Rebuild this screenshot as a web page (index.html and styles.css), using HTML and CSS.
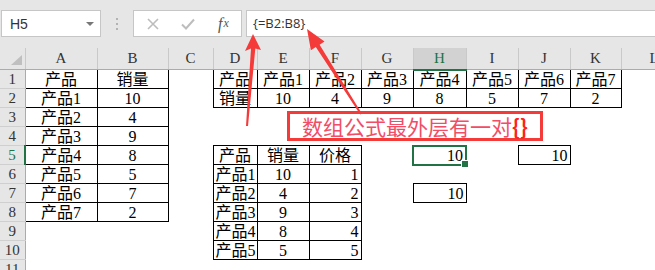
FILE: index.html
```html
<!DOCTYPE html>
<html lang="zh-CN">
<head>
    <meta charset="UTF-8">
    <title>数组公式</title>
    <link rel="stylesheet" href="styles.css">
</head>
<body>
    <div class="toolbar">
        <div class="namebox"><span>H5</span><span class="caret"></span></div>
        <div class="grip"><i></i><i></i><i></i></div>
        <div class="buttons">
            <span class="btn">
                <svg width="12" height="12" viewBox="0 0 12 12"><path d="M1 1L11 11M11 1L1 11" stroke="#bdbdbd" stroke-width="1.6" fill="none"/></svg>
            </span>
            <span class="btn">
                <svg width="14" height="12" viewBox="0 0 14 12"><path d="M1 6.5L5 10.5L13 1.5" stroke="#bdbdbd" stroke-width="2" fill="none"/></svg>
            </span>
            <span class="btn fx"><i>f</i><sub>x</sub></span>
        </div>
        <div class="formula">{=B2:B8}</div>
    </div>

    <table class="sheet">
        <colgroup>
            <col style="width:25px"><col style="width:72px"><col style="width:71px"><col style="width:45px">
            <col style="width:44px"><col style="width:52px"><col style="width:52px"><col style="width:52px">
            <col style="width:53px"><col style="width:52px"><col style="width:52px"><col style="width:51px"><col style="width:66px">
        </colgroup>
        <thead>
            <tr>
                <th class="corner"><span class="tri"></span></th>
                <th>A</th><th>B</th><th>C</th><th>D</th><th>E</th><th>F</th><th>G</th>
                <th class="cur">H</th><th>I</th><th>J</th><th>K</th><th>L</th>
            </tr>
        </thead>
        <tbody>
            <tr>
                <th>1</th><td class="b c">产品</td><td class="b c">销量</td><td></td>
                <td class="b c">产品</td><td class="b c">产品1</td><td class="b c">产品2</td><td class="b c">产品3</td>
                <td class="b c">产品4</td><td class="b c">产品5</td><td class="b c">产品6</td><td class="b c">产品7</td><td></td>
            </tr>
            <tr>
                <th>2</th><td class="b c">产品1</td><td class="b c">10</td><td></td>
                <td class="b c">销量</td><td class="b c">10</td><td class="b c">4</td><td class="b c">9</td>
                <td class="b c">8</td><td class="b c">5</td><td class="b c">7</td><td class="b c">2</td><td></td>
            </tr>
            <tr>
                <th>3</th><td class="b c">产品2</td><td class="b c">4</td><td></td>
                <td></td><td></td><td></td><td></td><td></td><td></td><td></td><td></td><td></td>
            </tr>
            <tr>
                <th>4</th><td class="b c">产品3</td><td class="b c">9</td><td></td>
                <td></td><td></td><td></td><td></td><td></td><td></td><td></td><td></td><td></td>
            </tr>
            <tr>
                <th class="cur">5</th><td class="b c">产品4</td><td class="b c">8</td><td></td>
                <td class="b c">产品</td><td class="b c">销量</td><td class="b c">价格</td><td></td>
                <td class="sel r">10</td><td></td><td class="b r">10</td><td></td><td></td>
            </tr>
            <tr>
                <th>6</th><td class="b c">产品5</td><td class="b c">5</td><td></td>
                <td class="b l">产品1</td><td class="b c">10</td><td class="b r">1</td><td></td>
                <td></td><td></td><td></td><td></td><td></td>
            </tr>
            <tr>
                <th>7</th><td class="b c">产品6</td><td class="b c">7</td><td></td>
                <td class="b l">产品2</td><td class="b c">4</td><td class="b r">2</td><td></td>
                <td class="b r">10</td><td></td><td></td><td></td><td></td>
            </tr>
            <tr>
                <th>8</th><td class="b c">产品7</td><td class="b c">2</td><td></td>
                <td class="b l">产品3</td><td class="b c">9</td><td class="b r">3</td><td></td>
                <td></td><td></td><td></td><td></td><td></td>
            </tr>
            <tr>
                <th>9</th><td></td><td></td><td></td>
                <td class="b l">产品4</td><td class="b c">8</td><td class="b r">4</td><td></td>
                <td></td><td></td><td></td><td></td><td></td>
            </tr>
            <tr>
                <th>10</th><td></td><td></td><td></td>
                <td class="b l">产品5</td><td class="b c">5</td><td class="b r">5</td><td></td>
                <td></td><td></td><td></td><td></td><td></td>
            </tr>
            <tr>
                <th>11</th><td></td><td></td><td></td>
                <td></td><td></td><td></td><td></td><td></td><td></td><td></td><td></td><td></td>
            </tr>
        </tbody>
    </table>

    <div class="note">数组公式最外层有一对<b>{}</b></div>

    <svg class="arrows" width="655" height="270" viewBox="0 0 655 270">
        <polygon fill="#f53a3a" points="253,34 261,50 255.3,48.5 248,126 246,126 251,48.5 245,51"/>
        <polygon fill="#f53a3a" points="307,29 324.5,41.6 319.6,44.7 361.8,113.5 360.2,114.5 315.8,47.1 310.9,50.2"/>
    </svg>
</body>
</html>
```

FILE: styles.css
```css
* { box-sizing: border-box; }
body { margin: 0; width: 655px; height: 270px; overflow: hidden; position: relative; background: #fff; font-family: "Liberation Serif", "Noto Sans CJK SC", serif; color: #000; }

/* formula bar */
.toolbar { display: flex; align-items: flex-start; height: 48px; padding-top: 10px; background: #e6e6e6; }
.namebox { display: flex; align-items: center; justify-content: space-between; width: 100px; height: 27px; margin-left: 1px; padding: 0 6px 0 8px; background: #fff; border: 1px solid #c6c6c6; font: 14px "Liberation Sans", sans-serif; color: #333; }
.caret { border-left: 4px solid transparent; border-right: 4px solid transparent; border-top: 4px solid #777; }
.grip { display: flex; flex-direction: column; align-items: center; gap: 3px; width: 32px; padding-top: 8px; }
.grip i { width: 2px; height: 2px; background: #b3b3b3; }
.buttons { display: flex; align-items: center; width: 109px; height: 27px; padding-left: 1px; background: #fff; border: 1px solid #c6c6c6; }
.btn { display: flex; justify-content: center; align-items: center; width: 36px; }
.fx { font: italic 16px "Liberation Serif", serif; color: #555; }
.fx sub { font-size: 12px; font-style: italic; vertical-align: -2px; margin-left: 1px; }
.formula { flex: 1; height: 27px; margin-left: 4px; margin-right: -2px; padding-left: 6px; background: #fff; border: 1px solid #c6c6c6; font: 13px "Open Sans", sans-serif; line-height: 25px; color: #333; }

/* grid */
.sheet { border-collapse: collapse; table-layout: fixed; width: 687px; font-size: 16px; }
.sheet td, .sheet th { height: 19px; padding: 0 2px; line-height: 17px; white-space: nowrap; overflow: visible; }
.sheet td { vertical-align: bottom; }
.sheet th { background: #e6e6e6; font-weight: normal; font-size: 15px; color: #333; text-align: center; vertical-align: middle; }
.sheet thead th { border-right: 1px solid #c9c9c9; border-bottom: 1px solid #ababab; }
.sheet tbody th { border-right: 1px solid #ababab; border-bottom: 1px solid #cfcfcf; }
.sheet thead th.cur { background: #d2d2d2; color: #217346; border-bottom: 2px solid #217346; }
.sheet tbody th.cur { color: #217346; border-right: 2px solid #217346; }
.corner { text-align: right !important; vertical-align: bottom !important; padding: 0 3px 4px 0 !important; }
.tri { display: inline-block; border-left: 11px solid transparent; border-bottom: 10px solid #bfbfbf; vertical-align: bottom; }
.b { border: 1px solid #000; }
.c { text-align: center; }
.l { text-align: left; }
.r { text-align: right; }
.sel { position: relative; border: 2px solid #217346; }
.sel::after { content: ""; position: absolute; right: -4px; bottom: -4px; width: 6px; height: 6px; background: #217346; border: 1px solid #fff; }

/* callout */
.note { position: absolute; left: 287px; top: 111px; width: 256px; height: 30px; border: 3px solid #f53a3a; background: #fff; font: 21px "Noto Sans CJK SC", sans-serif; line-height: 24px; color: #f24d66; text-align: center; }
.note b { color: #ff2020; }
.arrows { position: absolute; left: 0; top: 0; pointer-events: none; }
```
